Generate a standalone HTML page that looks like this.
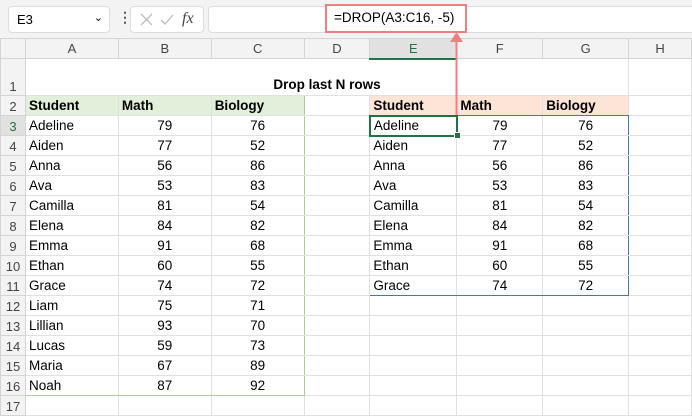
<!DOCTYPE html><html><head><style>
body{margin:0;width:692px;height:416px;overflow:hidden;background:#fff;font-family:"Liberation Sans",sans-serif;position:relative}
.top{position:absolute;left:0;top:0;width:692px;height:38px;background:#f3f3f3}
.box{position:absolute;background:#fff;border:1px solid #dcdcdc;border-radius:4px}
table{position:absolute;left:0;top:38px;border-collapse:collapse;table-layout:fixed}
tr{height:20px}
td{border:1px solid #e1e1e1;padding:0 3px;font-size:13.5px;line-height:17px;height:18px;white-space:nowrap;overflow:hidden;color:#000;box-sizing:border-box}
td.h{background:#f3f3f3;color:#444;text-align:center;font-size:13px;border-color:#d4d4d4}
td.r{background:#f3f3f3;color:#444;text-align:center;font-size:13px;border-color:#d4d4d4;padding:0;vertical-align:bottom}
.c{text-align:center}
.g{background:#e2efda;font-weight:bold}
.o{background:#fce4d6;font-weight:bold}
</style></head><body>
<div class="top"></div>
<div class="box" style="left:8px;top:6px;width:100px;height:25px"><span style="position:absolute;left:8px;top:5px;font-size:13px">E3</span><span style="position:absolute;right:6px;top:4px;font-size:11px">&#8964;</span></div>
<div style="position:absolute;left:118px;top:9px;font-size:14px;color:#555;font-weight:bold">&#8942;</div>
<div class="box" style="left:130px;top:6px;width:72px;height:25px">
<svg width="72" height="25" style="position:absolute;left:0;top:0"><path d="M10 7l11 11M21 7l-11 11" stroke="#bbb" stroke-width="1.3" fill="none"/><path d="M30 13l4 4l8 -9" stroke="#bbb" stroke-width="1.3" fill="none"/></svg>
<span style="position:absolute;left:51px;top:3px;font-family:'Liberation Serif',serif;font-style:italic;font-size:16px;color:#444">fx</span></div>
<div class="box" style="left:208px;top:6px;width:490px;height:25px"></div>
<div style="position:absolute;left:325px;top:4px;width:138px;height:25px;border:2px solid #f08080;background:#fff"><span style="position:absolute;left:7px;top:4px;font-size:13.5px">=DROP(A3:C16, -5)</span></div>
<table>
<colgroup><col style="width:25px"><col style="width:93px"><col style="width:93px"><col style="width:93px"><col style="width:66px"><col style="width:87px"><col style="width:86px"><col style="width:86px"><col style="width:63px"></colgroup>
<tr><td class="h"></td><td class="h">A</td><td class="h">B</td><td class="h">C</td><td class="h">D</td><td class="h" style="background:#e1e1e1;color:#217346;border-bottom:2px solid #217346">E</td><td class="h">F</td><td class="h">G</td><td class="h">H</td></tr>
<tr style="height:37px"><td class="r" style="height:37px">1</td><td colspan="7" style="height:37px;text-align:center;vertical-align:bottom;font-weight:bold;padding-bottom:2px">Drop last N rows</td><td style="height:37px"></td></tr>
<tr><td class="r">2</td><td class="g" style="border-top:1px solid #a9d08e;border-left:1px solid #a9d08e">Student</td><td class="g" style="border-top:1px solid #a9d08e">Math</td><td class="g" style="border-top:1px solid #a9d08e;border-right:1px solid #a9d08e">Biology</td><td></td><td class="o">Student</td><td class="o" style="border-bottom:1px solid #4472c4">Math</td><td class="o" style="border-bottom:1px solid #4472c4">Biology</td><td></td></tr>
<tr><td class="r" style="background:#e1e1e1;color:#217346">3</td><td style="border-left:1px solid #a9d08e">Adeline</td><td class="c">79</td><td class="c" style="border-right:1px solid #a9d08e">76</td><td></td><td style="border:2px solid #217346">Adeline</td><td class="c" style="border-top:1px solid #4472c4">79</td><td class="c" style="border-top:1px solid #4472c4;border-right:1px solid #4472c4">76</td><td></td></tr>
<tr><td class="r">4</td><td style="border-left:1px solid #a9d08e">Aiden</td><td class="c">77</td><td class="c" style="border-right:1px solid #a9d08e">52</td><td></td><td style="border-left:1px solid #4472c4">Aiden</td><td class="c">77</td><td class="c" style="border-right:1px solid #4472c4">52</td><td></td></tr>
<tr><td class="r">5</td><td style="border-left:1px solid #a9d08e">Anna</td><td class="c">56</td><td class="c" style="border-right:1px solid #a9d08e">86</td><td></td><td style="border-left:1px solid #4472c4">Anna</td><td class="c">56</td><td class="c" style="border-right:1px solid #4472c4">86</td><td></td></tr>
<tr><td class="r">6</td><td style="border-left:1px solid #a9d08e">Ava</td><td class="c">53</td><td class="c" style="border-right:1px solid #a9d08e">83</td><td></td><td style="border-left:1px solid #4472c4">Ava</td><td class="c">53</td><td class="c" style="border-right:1px solid #4472c4">83</td><td></td></tr>
<tr><td class="r">7</td><td style="border-left:1px solid #a9d08e">Camilla</td><td class="c">81</td><td class="c" style="border-right:1px solid #a9d08e">54</td><td></td><td style="border-left:1px solid #4472c4">Camilla</td><td class="c">81</td><td class="c" style="border-right:1px solid #4472c4">54</td><td></td></tr>
<tr><td class="r">8</td><td style="border-left:1px solid #a9d08e">Elena</td><td class="c">84</td><td class="c" style="border-right:1px solid #a9d08e">82</td><td></td><td style="border-left:1px solid #4472c4">Elena</td><td class="c">84</td><td class="c" style="border-right:1px solid #4472c4">82</td><td></td></tr>
<tr><td class="r">9</td><td style="border-left:1px solid #a9d08e">Emma</td><td class="c">91</td><td class="c" style="border-right:1px solid #a9d08e">68</td><td></td><td style="border-left:1px solid #4472c4">Emma</td><td class="c">91</td><td class="c" style="border-right:1px solid #4472c4">68</td><td></td></tr>
<tr><td class="r">10</td><td style="border-left:1px solid #a9d08e">Ethan</td><td class="c">60</td><td class="c" style="border-right:1px solid #a9d08e">55</td><td></td><td style="border-left:1px solid #4472c4">Ethan</td><td class="c">60</td><td class="c" style="border-right:1px solid #4472c4">55</td><td></td></tr>
<tr><td class="r">11</td><td style="border-left:1px solid #a9d08e">Grace</td><td class="c">74</td><td class="c" style="border-right:1px solid #a9d08e">72</td><td></td><td style="border-left:1px solid #4472c4;border-bottom:1px solid #4472c4">Grace</td><td class="c" style="border-bottom:1px solid #4472c4">74</td><td class="c" style="border-right:1px solid #4472c4;border-bottom:1px solid #4472c4">72</td><td></td></tr>
<tr><td class="r">12</td><td style="border-left:1px solid #a9d08e">Liam</td><td class="c">75</td><td class="c" style="border-right:1px solid #a9d08e">71</td><td></td><td></td><td></td><td></td><td></td></tr>
<tr><td class="r">13</td><td style="border-left:1px solid #a9d08e">Lillian</td><td class="c">93</td><td class="c" style="border-right:1px solid #a9d08e">70</td><td></td><td></td><td></td><td></td><td></td></tr>
<tr><td class="r">14</td><td style="border-left:1px solid #a9d08e">Lucas</td><td class="c">59</td><td class="c" style="border-right:1px solid #a9d08e">73</td><td></td><td></td><td></td><td></td><td></td></tr>
<tr><td class="r">15</td><td style="border-left:1px solid #a9d08e">Maria</td><td class="c">67</td><td class="c" style="border-right:1px solid #a9d08e">89</td><td></td><td></td><td></td><td></td><td></td></tr>
<tr><td class="r">16</td><td style="border-left:1px solid #a9d08e;border-bottom:1px solid #a9d08e">Noah</td><td class="c" style="border-bottom:1px solid #a9d08e">87</td><td class="c" style="border-right:1px solid #a9d08e;border-bottom:1px solid #a9d08e">92</td><td></td><td></td><td></td><td></td><td></td></tr>
<tr><td class="r">17</td><td></td><td></td><td></td><td></td><td></td><td></td><td></td><td></td></tr>
</table>
<div style="position:absolute;left:454px;top:132px;width:5px;height:5px;background:#217346;border:1px solid #fff"></div>
<svg width="692" height="416" style="position:absolute;left:0;top:0;pointer-events:none"><path d="M456.5 115V34" stroke="#f08080" stroke-width="2"/><path d="M450 42l6.5-10l6.5 10z" fill="#f08080"/></svg>
</body></html>
